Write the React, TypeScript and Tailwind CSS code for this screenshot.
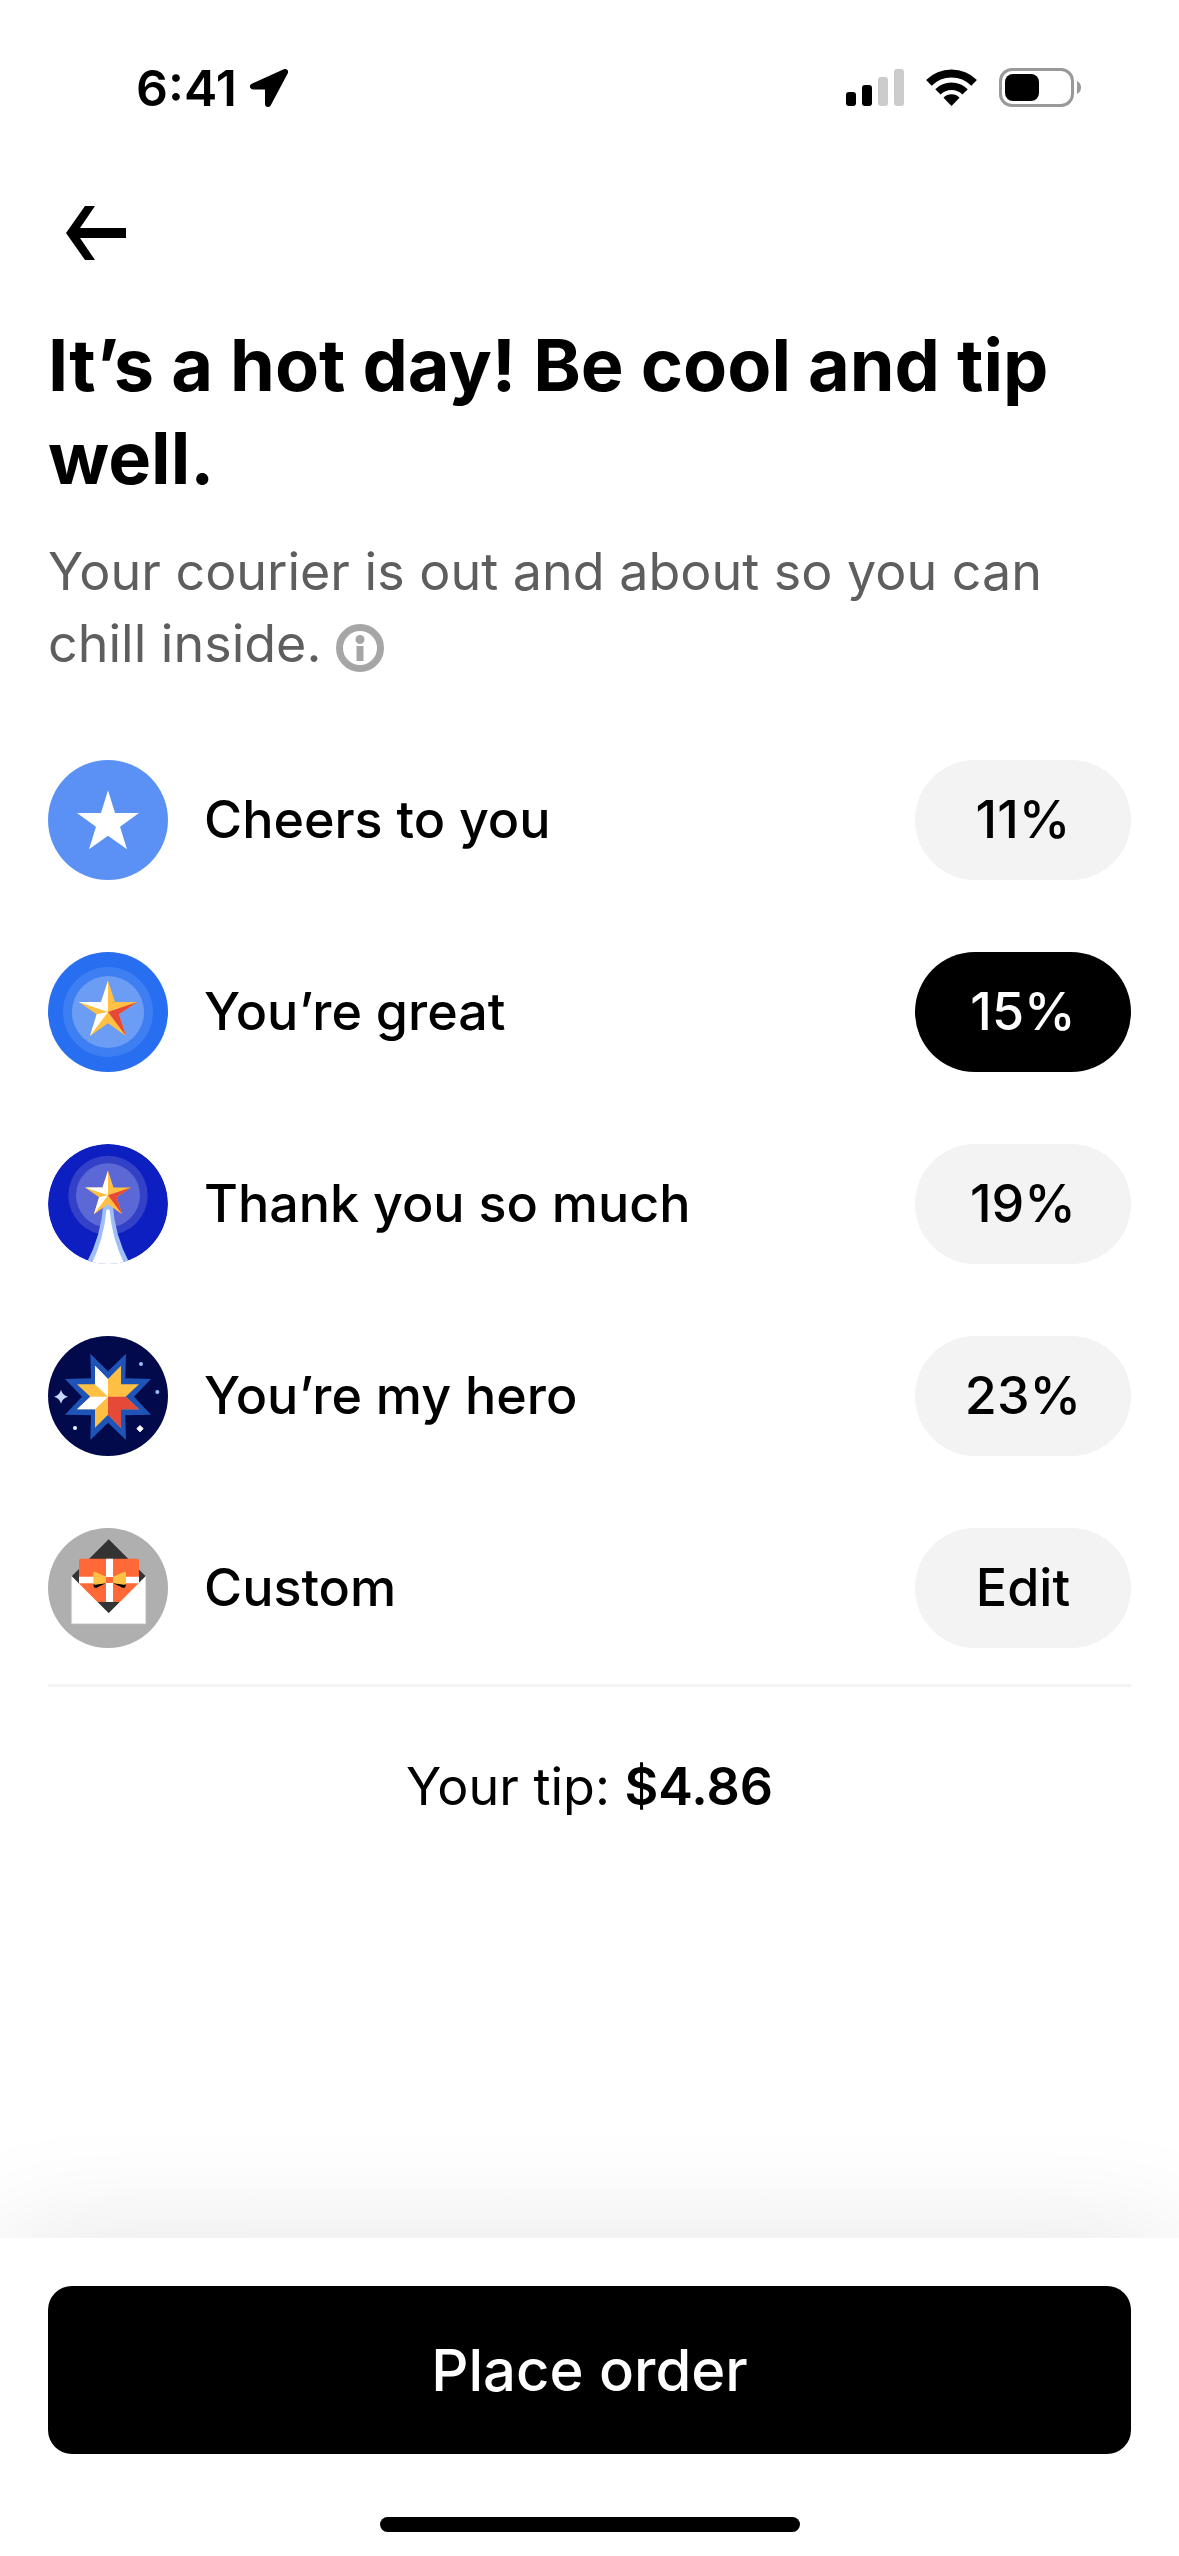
import { useState } from 'react';
import type { ReactNode } from 'react';

interface TipOption {
  id: string;
  label: string;
  action: string;
  icon: ReactNode;
}

/** Five-pointed star, split into light and dark facets. */
function FacetedStar() {
  return (
    <g>
      <path d="M0-94 21-30 88-30 33 7 54 72 0 34-54 72-34 7-88-30-21-30Z" fill="#ffc043" />
      <path d="M0 0 0-94-21-30Z" fill="#fff" />
      <path d="M0 0-21-30-88-30Z" fill="#fff" />
      <path d="M0 0-34 7-54 72Z" fill="#fff" />
      <path d="M0 0 88-30 33 7 54 72Z" fill="#e54937" />
    </g>
  );
}

function CheersIcon() {
  return (
    <svg viewBox="24 30 360 360" className="size-[120px] shrink-0" aria-hidden="true">
      <circle cx="204" cy="210" r="180" fill="#5b91f5" />
      <path d="M204 121 225 189H297L240 230 261 298 204 257 147 298 168 230 111 189H183Z" fill="#fff" />
    </svg>
  );
}

function GreatIcon() {
  return (
    <svg viewBox="24 36 360 360" className="size-[120px] shrink-0" aria-hidden="true">
      <circle cx="204" cy="216" r="180" fill="#276ef1" />
      <circle cx="204" cy="216" r="135" fill="#3d7ef2" />
      <circle cx="204" cy="216" r="108" fill="#6c9df5" />
      <g transform="translate(204 216)">
        <FacetedStar />
      </g>
    </svg>
  );
}

function ThanksIcon() {
  return (
    <svg viewBox="24 36 360 360" className="size-[120px] shrink-0" aria-hidden="true">
      <defs>
        <clipPath id="thanks-disc">
          <circle cx="204" cy="216" r="180" />
        </clipPath>
      </defs>
      <g clipPath="url(#thanks-disc)">
        <circle cx="204" cy="216" r="180" fill="#0e1fc1" />
        <circle cx="204" cy="190" r="119" fill="#3341c8" />
        <circle cx="204" cy="190" r="96" fill="#5c68d5" />
        <path d="M190 215H218Q224 310 268 392H140Q184 310 190 215Z" fill="#a0bff8" />
        <path d="M199 236Q204 228 209 236 216 320 255 400H153Q192 320 199 236Z" fill="#fff" />
      </g>
      <g transform="translate(204 190) scale(.784)">
        <FacetedStar />
      </g>
    </svg>
  );
}

function HeroIcon() {
  return (
    <svg viewBox="24 36 360 360" className="size-[120px] shrink-0" aria-hidden="true">
      <circle cx="204" cy="216" r="180" fill="#030a4b" />
      <path
        d="M151 89 204 142 258 89 256 163 333 165 282 218 333 272 256 274 258 348 204 296 151 348 153 274 75 272 126 218 75 165 153 163Z"
        fill="#1e54b7"
      />
      <path
        d="M165 125 204 165 243 125V181H297L257 218 297 256H243V311L204 272 165 311V256H111L151 218 111 181H165Z"
        fill="#ffc043"
      />
      <path d="M204 218 165 181V125L204 165ZM204 218H151L111 256H165Z" fill="#fff" />
      <path d="M204 218H257L297 256H243V311L204 272Z" fill="#e54937" />
      <path d="M63 197Q67 214 84 218 67 222 63 239 59 222 42 218 59 214 63 197Z" fill="#c6d8fb" />
      <circle cx="303" cy="120" r="6" fill="#9dbcf8" />
      <circle cx="352" cy="204" r="6" fill="#9dbcf8" />
      <circle cx="105" cy="312" r="6" fill="#eef3fe" />
      <path d="M300 305 305 309 309 314 305 319 300 323 295 319 291 314 295 309Z" fill="#fff" stroke="#fff" strokeWidth="3" />
    </svg>
  );
}

function CustomIcon() {
  return (
    <svg viewBox="24 36 360 360" className="size-[120px] shrink-0" aria-hidden="true">
      <circle cx="204" cy="216" r="180" fill="#afafaf" />
      <path d="M206 70 317 181 206 292 95 181Z" fill="#333" />
      <rect x="117" y="128" width="180" height="130" rx="6" fill="#ff6937" />
      <path d="M117 182H297V202H117ZM198 128H219V258H198Z" fill="#fff" />
      <path d="M95 181 206 292 317 181V323H95Z" fill="#fff" />
      <path d="M95 181V323H317V181" fill="none" stroke="#dcdcdc" strokeWidth="2" />
      <path d="M161 204 199 201 168 216Q162 216 161 211ZM257 204 218 201 250 216Q256 216 257 211Z" fill="#000" />
      <path d="M160 172Q160 166 167 168L200 183V201L167 206Q160 207 160 201ZM258 172Q258 166 251 168L218 183V201L251 206Q258 207 258 201Z" fill="#ffc043" />
      <rect x="198" y="183" width="21" height="18" fill="#ff6937" />
    </svg>
  );
}

const TIP_OPTIONS: TipOption[] = [
  { id: 'cheers', label: 'Cheers to you', action: '11%', icon: <CheersIcon /> },
  { id: 'great', label: 'You’re great', action: '15%', icon: <GreatIcon /> },
  { id: 'thanks', label: 'Thank you so much', action: '19%', icon: <ThanksIcon /> },
  { id: 'hero', label: 'You’re my hero', action: '23%', icon: <HeroIcon /> },
  { id: 'custom', label: 'Custom', action: 'Edit', icon: <CustomIcon /> },
];

function StatusBar() {
  return (
    <div className="flex items-center justify-between pt-16 pr-[98px] pl-[136px]">
      <div className="flex h-12 items-center gap-3">
        <span className="text-[50px] leading-12 font-semibold">6:41</span>
        <svg viewBox="0 0 40 40" className="size-10" aria-hidden="true">
          <path d="M36 4 4 18.5H19V36Z" stroke="#000" strokeWidth="6" strokeLinejoin="round" />
        </svg>
      </div>
      <div className="flex items-center">
        <svg viewBox="0 0 58 38" className="mr-[22px] h-[38px] w-[58px]" aria-hidden="true">
          <rect y="23" width="10" height="14" rx="3" />
          <rect x="16" y="16" width="10" height="21" rx="3" />
          <rect x="32" y="8" width="10" height="29" rx="3" fill="#ccc" />
          <rect x="48" width="10" height="37" rx="3" fill="#ccc" />
        </svg>
        <svg viewBox="0 0 51 38" className="mr-[22px] h-[38px] w-[51px]" aria-hidden="true">
          <path d="M2.9 13.9A32 32 0 0 1 48.1 13.9" fill="none" stroke="#000" strokeWidth="8" />
          <path d="M11.9 22.9A19.3 19.3 0 0 1 39.1 22.9" fill="none" stroke="#000" strokeWidth="7.5" />
          <path d="M25.5 37 17.5 28.7A11 11 0 0 1 33.5 28.7Z" />
        </svg>
        <svg viewBox="0 0 82 40" className="h-10 w-[82px]" aria-hidden="true">
          <rect x="1.5" y="1.5" width="72" height="36" rx="11.5" fill="none" stroke="#999" strokeWidth="3" />
          <rect x="6" y="6" width="34" height="27" rx="8" />
          <path d="M78 13Q82 15 82 19.5T78 26Z" fill="#999" />
        </svg>
      </div>
    </div>
  );
}

/** One row of the tip list: badge, message and amount pill. */
function TipRow({ option, selected, onSelect }: { option: TipOption; selected: boolean; onSelect: () => void }) {
  return (
    <li className="flex items-center">
      {option.icon}
      <span id={`tip-${option.id}`} className="min-w-0 flex-1 pl-9 text-[52px] leading-[72px] font-medium">
        {option.label}
      </span>
      <button
        type="button"
        aria-pressed={selected}
        aria-describedby={`tip-${option.id}`}
        onClick={onSelect}
        className={[
          'h-[120px] w-[216px] shrink-0 rounded-full text-[52px] font-medium',
          selected ? 'bg-black text-white' : 'bg-[#f3f3f3] text-black',
        ].join(' ')}
      >
        {option.action}
      </button>
    </li>
  );
}

export default function App() {
  const [selectedId, setSelectedId] = useState('great');

  return (
    <div className="flex min-h-screen flex-col bg-white font-[Inter,sans-serif] text-black">
      <StatusBar />

      <nav className="px-12 pt-[76px]">
        <button type="button" aria-label="Back" className="block p-[18px]">
          <svg viewBox="0 0 60 54" className="h-[54px] w-[60px]" aria-hidden="true">
            <path d="M19 0H29L14 22H60V32H14L29 54H19L0 27Z" />
          </svg>
        </button>
      </nav>

      <main className="flex-1 px-12 pt-10">
        <h1 className="text-[72px] leading-[93px] font-bold">It’s a hot day! Be cool and tip well.</h1>
        <p className="mt-8 text-[52px] leading-[72px] text-[#5e5e5e]">
          Your courier is out and about so you can chill inside.{' '}
          <button type="button" aria-label="About tipping" className="inline-block align-middle">
            <svg viewBox="0 0 48 48" className="size-12" aria-hidden="true">
              <circle cx="24" cy="24" r="20.5" fill="none" stroke="#a6a6a6" strokeWidth="7" />
              <circle cx="24" cy="15.5" r="4.5" fill="#a6a6a6" />
              <path d="M20.5 22H27.5V37H20.5Z" fill="#a6a6a6" />
            </svg>
          </button>
        </p>

        <ul className="mt-20 flex flex-col gap-[72px] border-b-3 border-[#f3f3f3] pb-9">
          {TIP_OPTIONS.map((option) => (
            <TipRow
              key={option.id}
              option={option}
              selected={option.id === selectedId}
              onSelect={() => setSelectedId(option.id)}
            />
          ))}
        </ul>

        <p className="mt-16 text-center text-[52px] leading-[72px]">
          Your tip: <span className="font-semibold">$4.86</span>
        </p>
      </main>

      <footer className="bg-white px-12 pt-12 pb-6 shadow-[0_0_120px_rgba(0,0,0,0.1)]">
        <button type="button" className="block h-[168px] w-full rounded-3xl bg-black text-[58px] font-medium text-white">
          Place order
        </button>
        <div className="mx-auto mt-[63px] h-[15px] w-[420px] rounded-full bg-black" />
      </footer>
    </div>
  );
}
